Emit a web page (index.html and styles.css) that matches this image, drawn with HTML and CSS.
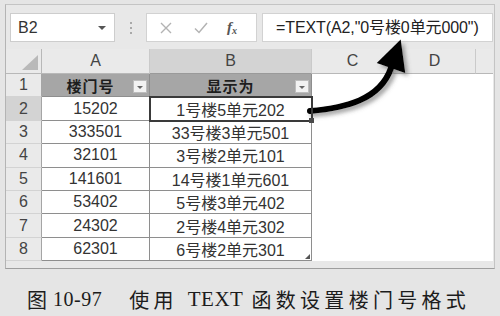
FILE: index.html
```html
<!DOCTYPE html>
<html>
<head>
<meta charset="utf-8">
<link rel="stylesheet" href="styles.css">
</head>
<body>
<div class="window">
  <div class="fbar">
    <div class="namebox"><span class="ref">B2</span><span class="dd"></span></div>
    <div class="sep"><i></i><i></i><i></i></div>
    <div class="icons">
      <svg class="ic" width="14" height="14" viewBox="0 0 14 14"><path d="M2 2 L12 12 M12 2 L2 12" stroke="#b3b3b3" stroke-width="1.4" fill="none"/></svg>
      <svg class="ic" width="16" height="14" viewBox="0 0 16 14"><path d="M2 7.5 L6 11.5 L14 2" stroke="#b3b3b3" stroke-width="1.5" fill="none"/></svg>
      <span class="fx">f<sub>x</sub></span>
    </div>
    <div class="input">=TEXT(A2,"0号楼0单元000")</div>
  </div>
  <div class="sheet">
    <div class="ch corner"><span class="tri"></span></div>
    <div class="ch">A</div>
    <div class="ch sel">B</div>
    <div class="ch">C</div>
    <div class="ch">D</div>
    <div class="ch last"></div>

    <div class="rh">1</div>
    <div class="c th tha">楼门号<span class="fb"></span></div>
    <div class="c th">显示为<span class="fb"></span></div>
    <div class="e"></div><div class="e"></div><div class="e"></div>

    <div class="rh selr">2</div>
    <div class="c">15202</div>
    <div class="c active">1号楼5单元202</div>
    <div class="e"></div><div class="e"></div><div class="e"></div>

    <div class="rh">3</div>
    <div class="c">333501</div>
    <div class="c">33号楼3单元501</div>
    <div class="e"></div><div class="e"></div><div class="e"></div>

    <div class="rh">4</div>
    <div class="c">32101</div>
    <div class="c">3号楼2单元101</div>
    <div class="e"></div><div class="e"></div><div class="e"></div>

    <div class="rh">5</div>
    <div class="c">141601</div>
    <div class="c">14号楼1单元601</div>
    <div class="e"></div><div class="e"></div><div class="e"></div>

    <div class="rh">6</div>
    <div class="c">53402</div>
    <div class="c">5号楼3单元402</div>
    <div class="e"></div><div class="e"></div><div class="e"></div>

    <div class="rh">7</div>
    <div class="c">24302</div>
    <div class="c">2号楼4单元302</div>
    <div class="e"></div><div class="e"></div><div class="e"></div>

    <div class="rh">8</div>
    <div class="c">62301</div>
    <div class="c tend">6号楼2单元301</div>
    <div class="e"></div><div class="e"></div><div class="e"></div>
  </div>
</div>
<div class="caption"><span class="fig">图</span><span class="num">10-97</span><span class="cjk first">使用</span><span class="lat">TEXT</span><span class="cjk">函数设置楼门号格式</span></div>

<svg class="arrow" width="500" height="316" viewBox="0 0 500 316">
  <defs>
    <filter id="sh" x="-20%" y="-20%" width="150%" height="150%">
      <feDropShadow dx="3" dy="3" stdDeviation="2" flood-color="#555" flood-opacity="0.55"/>
    </filter>
  </defs>
  <g filter="url(#sh)">
    <path d="M310 111 C345 108 380 100 391 68" stroke="#000" stroke-width="6" fill="none" stroke-linecap="round"/>
    <polygon points="400.7,39.6 376.8,63.1 405.2,72.9" fill="#000"/>
  </g>
</svg>
</body>
</html>
```

FILE: styles.css
```css
* { box-sizing: border-box; }
html, body { margin: 0; padding: 0; }
body {
  width: 500px;
  height: 316px;
  background: #e5e5e5;
  font-family: "Liberation Sans", Arial, "Noto Sans CJK SC", sans-serif;
  color: #333;
  position: relative;
  overflow: hidden;
}
.window {
  margin: 4px 0 0 5px;
  width: 490px;
  height: 265px;
  background: #e8e8e8;
  border-left: 1px solid #b4b4b4;
  border-top: 1px solid #c4c4c4;
  border-bottom: 1px solid #9e9e9e;
  border-right: 1px solid #c4c4c4;
}
.fbar {
  display: flex;
  padding: 8px 0 0 4px;
  height: 37px;
}
.namebox {
  width: 105px;
  height: 29px;
  background: #fff;
  border: 1px solid #cdcdcd;
  display: flex;
  align-items: center;
  justify-content: space-between;
  padding: 0 8px 0 7px;
  font-size: 16px;
  color: #333;
}
.dd {
  width: 0; height: 0;
  border-left: 4px solid transparent;
  border-right: 4px solid transparent;
  border-top: 4px solid #555;
  margin-top: 1px;
}
.sep {
  width: 31px;
  display: flex;
  flex-direction: column;
  align-items: center;
  justify-content: center;
  gap: 3px;
  height: 29px;
  padding-left: 1px;
}
.sep i {
  display: block;
  width: 2px; height: 2px;
  background: #a9a9a9;
}
.icons {
  width: 111px;
  height: 29px;
  background: #fff;
  border: 1px solid #d2d2d2;
  display: flex;
  align-items: center;
  padding-left: 12px;
}
.icons .ic { display: block; }
.icons .ic:nth-child(1) { margin-right: 20px; }
.icons .ic:nth-child(2) { margin-right: 18px; }
.fx {
  font-family: "Liberation Serif", serif;
  font-style: italic;
  font-weight: bold;
  font-size: 15px;
  color: #555;
}
.fx sub { font-size: 10px; vertical-align: -2px; }
.input {
  margin-left: 5px;
  width: 231px;
  height: 29px;
  background: #fff;
  border: 1px solid #d2d2d2;
  font-size: 16px;
  line-height: 27px;
  padding-left: 13px;
  color: #222;
  white-space: nowrap;
  letter-spacing: -0.1px;
}
.sheet {
  margin-top: 7px;
  width: 487px;
  display: grid;
  grid-template-columns: 36px 108px 162px 82px 82px 17px;
  grid-template-rows: 25px repeat(8, 23.4px);
  background: #fff;
  border-right: 1px solid #a8a8a8;
  font-size: 16px;
}
.ch {
  background: #eaeaea;
  border-right: 1px solid #cacaca;
  border-bottom: 1px solid #b8b8b8;
  display: flex;
  align-items: center;
  justify-content: center;
  color: #444;
  font-size: 16px;
}
.ch.sel { background: #d3d3d3; border-bottom-color: #9a9a9a; }
.ch.last { border-right: none; }
.corner {
  position: relative;
  border-right: 1px solid #b8b8b8;
}
.tri {
  position: absolute;
  right: 3px;
  bottom: 3px;
  width: 0; height: 0;
  border-left: 16px solid transparent;
  border-bottom: 15px solid #b9b9b9;
}
.rh {
  background: #eaeaea;
  border-right: 1px solid #a5a5a5;
  border-bottom: 1px solid #d3d3d3;
  display: flex;
  align-items: center;
  justify-content: center;
  color: #444;
}
.rh.selr { background: #d3d3d3; }
.c {
  border-right: 1px solid #8e8e8e;
  border-bottom: 1px solid #8e8e8e;
  display: flex;
  align-items: center;
  justify-content: center;
  color: #333;
  white-space: nowrap;
  position: relative;
}
.th {
  background: #a6a6a6;
  font-weight: bold;
  color: #1e1e1e;
  font-size: 15px;
  letter-spacing: 1px;
}
.tha { padding-right: 10px; }
.fb {
  position: absolute;
  right: 2px;
  top: 6px;
  width: 14px;
  height: 13px;
  background: #f2f2f2;
  border: 1px solid #bdbdbd;
}
.fb::after {
  content: "";
  position: absolute;
  left: 3px;
  top: 5px;
  border-left: 3px solid transparent;
  border-right: 3px solid transparent;
  border-top: 3px solid #666;
}
.active {
  outline: 2px solid #3a3a3a;
  outline-offset: -1px;
  z-index: 2;
}
.active::after {
  content: "";
  position: absolute;
  right: -3px;
  bottom: -3px;
  width: 5px;
  height: 5px;
  background: #4a4a4a;
}
.tend::after {
  content: "";
  position: absolute;
  right: 1px;
  bottom: 1px;
  border-left: 5px solid transparent;
  border-bottom: 5px solid #555;
}
.e { background: #fff; }
.caption {
  margin-top: 19px;
  padding-left: 27px;
  display: flex;
  align-items: center;
  height: 22px;
  font-family: "Liberation Serif", "Noto Sans CJK SC", serif;
  font-size: 20px;
  color: #1c1c1c;
  white-space: nowrap;
}
.fig { margin-right: 6px; }
.num { letter-spacing: 0.5px; }
.cjk { letter-spacing: 4.3px; }
.cjk.first { margin-left: 27px; }
.lat { margin: 0 8px 0 10px; font-size: 21px; letter-spacing: 0.5px; }
.arrow {
  position: absolute;
  left: 0;
  top: 0;
  pointer-events: none;
}
```
